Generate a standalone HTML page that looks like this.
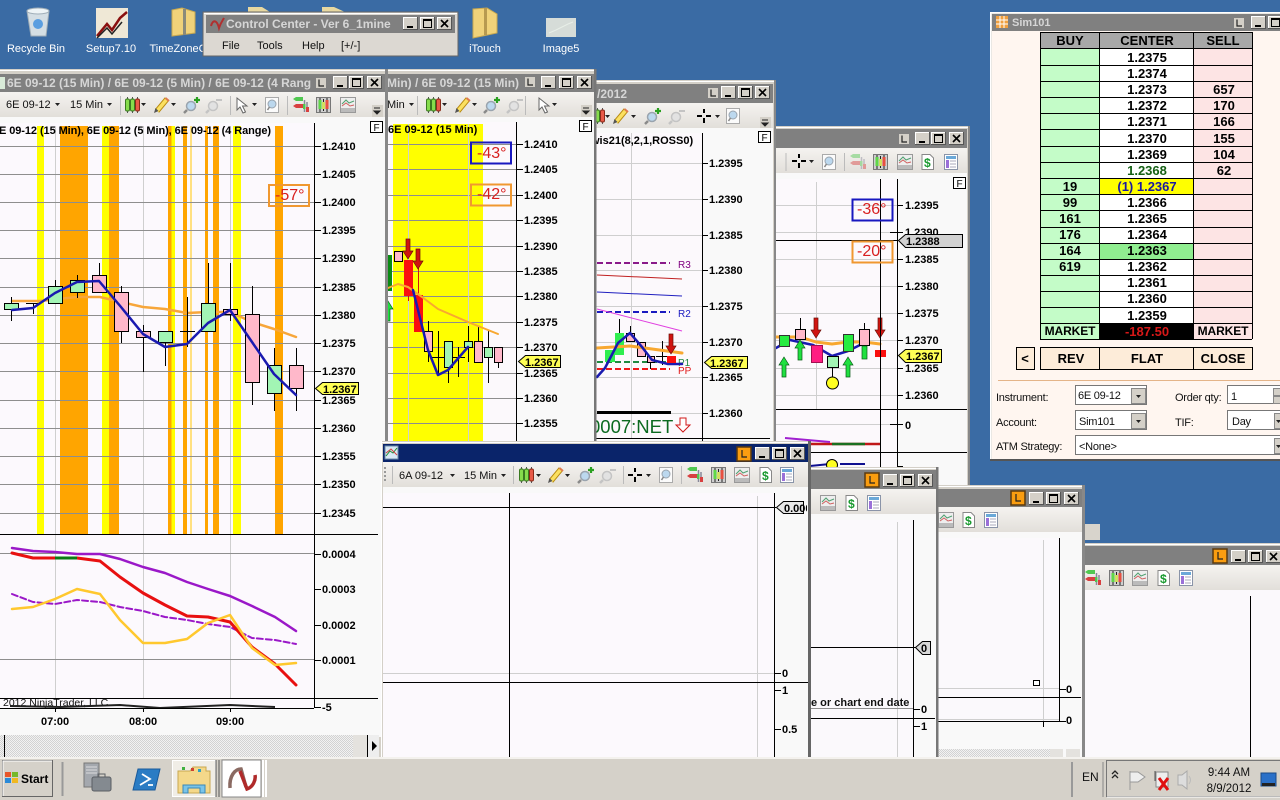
<!DOCTYPE html>
<html><head><meta charset="utf-8"><title>NinjaTrader</title>
<style>
html,body{margin:0;padding:0;width:1280px;height:800px;overflow:hidden;background:#3a6ba4}
svg{display:block}
text{font-family:"Liberation Sans",sans-serif}
.ax{font-size:11px;font-weight:bold;fill:#000}
.tt{font-size:12px;font-weight:bold;fill:#d6d6d6}
.tb{font-size:11px;fill:#111}
.dk{font-size:11px;fill:#fff;text-anchor:middle}
.ang{font-size:16px;fill:#d82020}
.sb{font-size:13px;font-weight:bold;fill:#000;text-anchor:middle}
.mk{font-size:12px;letter-spacing:-.1px}
.lb{font-size:11px;fill:#111;letter-spacing:-.25px}
.k{stroke:#000;fill:none;shape-rendering:crispEdges}
.g{stroke:#8e8e8e;fill:none;shape-rendering:crispEdges}
.l{stroke:#cfcfcf;fill:none;shape-rendering:crispEdges}
.cg{fill:#a2f5b4;stroke:#000;shape-rendering:crispEdges}
.cp{fill:#ffb8ca;stroke:#000;shape-rendering:crispEdges}
.cr{fill:#fa0f0f;shape-rendering:crispEdges}
.cb{fill:#26ec40;stroke:#333;shape-rendering:crispEdges}
.r{shape-rendering:crispEdges}
.ln{fill:none;stroke-linejoin:round;stroke-linecap:round}
</style></head><body>
<svg width="1280" height="800" viewBox="0 0 1280 800" xmlns="http://www.w3.org/2000/svg">
<defs>
<linearGradient id="tg" x1="0" y1="0" x2="0" y2="1"><stop offset="0" stop-color="#f5f3f0"/><stop offset="1" stop-color="#e2dfda"/></linearGradient>
<pattern id="di" width="2" height="2" patternUnits="userSpaceOnUse"><rect width="2" height="2" fill="#f2f2f2"/><rect width="1" height="1" fill="#d2d2d2"/><rect x="1" y="1" width="1" height="1" fill="#d2d2d2"/></pattern>
<g id="bb"><rect width="15" height="13" fill="#d4d0c8"/><path d="M.5 13V.5H15" fill="none" stroke="#fff"/><path d="M14.500 0V12.500H0" fill="none" stroke="#555"/></g>
<g id="bmin"><use href="#bb"/><rect x="4" y="9" width="6" height="2" fill="#000"/></g>
<g id="bmax"><use href="#bb"/><rect x="3.500" y="2.500" width="8" height="8" fill="none" stroke="#000"/><rect x="3" y="2" width="9" height="2" fill="#000"/></g>
<g id="bclo"><use href="#bb"/><path d="M4 3L11 10M11 3L4 10" stroke="#000" stroke-width="1.600"/></g>
<g id="lo"><rect width="14" height="14" fill="#fa9d10" stroke="#5a3a10" stroke-width="1.500"/><path d="M5 3V10H10" stroke="#222" stroke-width="1.200" fill="none"/></g>
<g id="lg"><rect width="10" height="10" fill="#d4d0c8"/><path d="M3 1.500V8H8" stroke="#222" stroke-width="1.200" fill="none"/></g>
<path id="da" d="M0 0H5L2.500 3Z" fill="#222"/>
<g id="ic"><path d="M2.500 0V16M7.500 0V16M12.500 0V16" stroke="#555"/><rect x=".5" y="2" width="4" height="12" rx="1.500" fill="#86dc4c" stroke="#3a7a20"/><rect x="5.500" y="2" width="4" height="12" rx="1.500" fill="#86dc4c" stroke="#3a7a20"/><rect x="10.500" y="2" width="4" height="12" rx="1.500" fill="#e85a48" stroke="#8a2a18"/></g>
<g id="pn"><path d="M3 14L13 2" stroke="#b88a10" stroke-width="5.500"/><path d="M3 14L13 2" stroke="#fbe060" stroke-width="3.500"/><path d="M0 16L1.500 11L4.500 14Z" fill="#555"/><path d="M11.500 1L15 4" stroke="#e07a50" stroke-width="2"/></g>
<g id="zp"><circle cx="7" cy="9" r="4.500" fill="#bcd8ee" stroke="#9aa4ae" stroke-width="1.500"/><path d="M3 13L0 16" stroke="#8a8a8a" stroke-width="2.500"/><path d="M13 0V6M10 3H16" stroke="#2aa020" stroke-width="2.200"/></g>
<g id="zm"><circle cx="7" cy="9" r="4.500" fill="#e2e2e2" stroke="#c4c4c4" stroke-width="1.500"/><path d="M3 13L0 16" stroke="#c4c4c4" stroke-width="2.500"/><path d="M10 3H16" stroke="#c4c4c4" stroke-width="2"/></g>
<path id="cu" d="M1 0V12L4 9L7 15L9.500 14L6.500 8H11Z" fill="#fff" stroke="#666"/>
<path id="cs" d="M7 0V4M7 9V14M0 7H5M9 7H14" stroke="#000" stroke-width="2" fill="none"/>
<g id="mg"><rect x=".5" y=".5" width="13" height="15" fill="#fbfbfb" stroke="#aaa"/><circle cx="7" cy="7" r="4" fill="#bcd8ee" stroke="#9aa4ae"/><path d="M4.500 10L2.500 13" stroke="#888" stroke-width="1.500"/></g>
<g id="bi"><path d="M0 2L3 0H10V4H3Z" fill="#50c850"/><path d="M0 9L3 7H10V11H3Z" fill="#d84040"/><path d="M11.500 3V15M14 5V15" stroke="#889" stroke-width="1.500"/><rect x="13" y="10" width="3" height="5" fill="#d84040"/><rect x="10" y="7" width="2.500" height="5" fill="#50c850"/></g>
<g id="ci"><rect x=".5" y=".5" width="14" height="15" fill="#cfcfcf" stroke="#777"/><rect x="2.500" y="3" width="3" height="9" fill="#60d848"/><rect x="6" y="5" width="3" height="7" fill="#d0e060"/><rect x="9.500" y="3" width="3" height="9" fill="#e85040"/><path d="M4 1V3M4 12V15M7.500 2V5M7.500 12V14M11 1V3M11 12V15" stroke="#222"/></g>
<g id="li"><rect x=".5" y=".5" width="15" height="15" fill="#eee" stroke="#999"/><rect x="1" y="11" width="14" height="4" fill="#bbb"/><path d="M2 7L6 3L9 6L14 4" stroke="#50a070" fill="none"/><path d="M2 9L6 6L10 9L14 8" stroke="#d06060" fill="none"/></g>
<g id="ds"><path d="M1 .5H9L12.500 4V15.500H1Z" fill="#fff" stroke="#888"/><text x="3" y="13" style="font-size:12px;font-weight:bold;fill:#1a9a30">$</text></g>
<g id="pa"><rect x=".5" y=".5" width="13" height="15" fill="#fff" stroke="#8a94a8"/><rect x="2" y="2" width="10" height="3" fill="#6aa8d8"/><rect x="2" y="6" width="3" height="8" fill="#9a70d8"/><path d="M6 7H12M6 10H12M6 13H12" stroke="#aab"/></g>
<g id="rd"><path d="M-2 0H2V12H5L0 20L-5 12H-2Z" fill="#d01410" stroke="#6a1008" stroke-width=".7"/></g>
<g id="gu"><path d="M0 0L5 8H2V20H-2V8H-5Z" fill="#20e040" stroke="#0a5a18" stroke-width=".7"/></g>
<g id="fb"><rect x=".5" y=".5" width="12" height="11" fill="#fff" stroke="#000"/><text x="3.500" y="10" style="font-size:10px;fill:#000">F</text></g>
</defs>

<!-- desktop -->
<rect width="1280" height="800" fill="#3a6ba4"/>
<path d="M27 11H49L46 36H31Z" fill="#d4dee4" stroke="#a0aeb8"/><ellipse cx="38" cy="11" rx="11" ry="3" fill="#eef4f6" stroke="#a0aeb8"/><circle cx="38" cy="24" r="5" fill="#5a9ee0"/>
<rect x="96" y="8" width="32" height="30" fill="#efe8d6"/><path d="M97 36L107 24L112 30L120 18L127 12" stroke="#8a1010" stroke-width="2.500" fill="none"/><path d="M97 38L107 28L112 34L122 22" stroke="#222" stroke-width="1.500" fill="none"/>
<path d="M172 10L182 8L195 12V33L172 36Z" fill="#f0d27a" stroke="#c8a850"/><rect x="183" y="9" width="3" height="26" fill="#8a8a7a"/>
<path d="M473 9L487 8L497 14V33L473 38Z" fill="#f0d27a" stroke="#c8a850"/><rect x="484" y="8" width="3" height="27" fill="#b89a50"/>
<rect x="546" y="18" width="30" height="19" fill="#d6dcd8"/><path d="M549 33L556 30L562 27L568 24L573 22" stroke="#e8eee8" fill="none"/>
<path d="M248 7H262L270 12H248ZM322 7H334L345 12H322Z" fill="#e8d8a0"/>
<text class="dk" x="36" y="52">Recycle Bin</text><text class="dk" x="111" y="52">Setup7.10</text><text class="dk" x="178" y="52">TimeZoneC</text><text class="dk" x="485" y="52">iTouch</text><text class="dk" x="561" y="52">Image5</text>

<!-- Control Center -->
<rect x="203" y="12" width="255" height="44" fill="#dcd8d2" stroke="#666"/><rect x="204" y="13" width="253" height="1" fill="#fff"/><rect x="206" y="15" width="249" height="18" fill="#808080"/>
<path d="M211 26C213 19 217 20 219 28C221 22 223 20 224 18" stroke="#b03030" stroke-width="2" fill="none"/>
<text x="226" y="28" style="font-size:12px;font-weight:bold;fill:#d6d6d6">Control Center - Ver 6_1mine</text>
<use href="#bmin" x="403" y="17"/><use href="#bmax" x="420" y="17"/><use href="#bclo" x="437" y="17"/>
<g class="tb"><text x="222" y="49">File</text><text x="257" y="49">Tools</text><text x="302" y="49">Help</text><text x="341" y="49">[+/-]</text></g>

<!-- Sim101 -->
<rect x="990" y="12" width="295" height="449" fill="#d4d0c8"/><rect x="990" y="12" width="295" height="1.500" fill="#fff"/><rect x="990" y="12" width="1.500" height="449" fill="#fff"/><rect x="990" y="459" width="295" height="2" fill="#555"/>
<rect x="992" y="14" width="288" height="17" fill="#808080"/><rect x="992" y="31" width="288" height="428" fill="#fff6f0"/>
<g class="r"><rect x="996" y="16" width="12" height="12" fill="#f0a040"/><path d="M1000 16V28M1004 16V28M996 20H1008M996 24H1008" stroke="#fff"/></g>
<text x="1012" y="26" style="font-size:11px;font-weight:bold;fill:#d6d6d6">Sim101</text>
<use href="#lg" x="1234" y="18"/><use href="#bmin" x="1251" y="16"/><use href="#bmax" x="1268" y="16"/>
<g class="r">
<rect x="1040" y="32" width="212" height="16" fill="#a8a8a8"/>
<rect x="1040" y="48" width="59" height="291" fill="#c4fcc8"/><rect x="1099" y="48" width="94" height="291" fill="#fff"/><rect x="1193" y="48" width="59" height="291" fill="#fde4e4"/>
<rect x="1099" y="178" width="94" height="16" fill="#ffff00"/><rect x="1099" y="243" width="94" height="16" fill="#90ee90"/>
<rect x="1099" y="323" width="94" height="16" fill="#000"/>
<path d="M1040 32.500H1252M1040 48.500H1252M1040 65.500H1252M1040 81.500H1252M1040 97.500H1252M1040 113.500H1252M1040 129.500H1252M1040 146.500H1252M1040 162.500H1252M1040 178.500H1252M1040 194.500H1252M1040 210.500H1252M1040 227.500H1252M1040 243.500H1252M1040 259.500H1252M1040 275.500H1252M1040 291.500H1252M1040 307.500H1252M1040 323.500H1252M1040 339.500H1252M1040.500 32V339M1099.500 32V339M1193.500 32V339M1252.500 32V339" stroke="#000" fill="none"/>
<rect x="1040.500" y="347.500" width="212" height="22" fill="#fdecd9" stroke="#000"/><path d="M1099.500 347V369M1193.500 347V369" stroke="#000"/>
<rect x="1016.500" y="347.500" width="18" height="22" fill="#fdecd9" stroke="#000"/>
<rect x="998" y="380" width="282" height="1" fill="#e4b488"/>
</g>
<g class="sb">
<text x="1070" y="45">BUY</text><text x="1147" y="45">CENTER</text><text x="1223" y="45">SELL</text>
<text x="1147" y="62">1.2375</text><text x="1147" y="78">1.2374</text><text x="1147" y="94">1.2373</text><text x="1147" y="110">1.2372</text><text x="1147" y="126">1.2371</text><text x="1147" y="143">1.2370</text><text x="1147" y="159">1.2369</text><text x="1147" y="175" style="fill:#156015">1.2368</text><text x="1147" y="191" style="fill:#1a1aa0">(1) 1.2367</text><text x="1147" y="207">1.2366</text><text x="1147" y="223">1.2365</text><text x="1147" y="239">1.2364</text><text x="1147" y="255">1.2363</text><text x="1147" y="271">1.2362</text><text x="1147" y="287">1.2361</text><text x="1147" y="303">1.2360</text><text x="1147" y="320">1.2359</text>
<text x="1224" y="94">657</text><text x="1224" y="110">170</text><text x="1224" y="126">166</text><text x="1224" y="143">155</text><text x="1224" y="159">104</text><text x="1224" y="175">62</text>
<text x="1070" y="191">19</text><text x="1070" y="207">99</text><text x="1070" y="223">161</text><text x="1070" y="239">176</text><text x="1070" y="255">164</text><text x="1070" y="271">619</text>
<text class="mk" x="1070" y="335">MARKET</text><text class="mk" x="1223" y="335">MARKET</text><text x="1147" y="336" style="fill:#d81818">-187.50</text>
<text x="1071" y="363">REV</text><text x="1147" y="363">FLAT</text><text x="1223" y="363">CLOSE</text><text x="1025" y="363">&lt;</text>
</g>
<g class="lb"><text x="996" y="401">Instrument:</text><text x="996" y="426">Account:</text><text x="996" y="450">ATM Strategy:</text><text x="1175" y="401">Order qty:</text><text x="1175" y="426">TIF:</text></g>
<g class="r" fill="#fff" stroke="#777">
<rect x="1075.500" y="385.500" width="71" height="19"/><rect x="1075.500" y="410.500" width="71" height="19"/><rect x="1075.500" y="435.500" width="210" height="19"/><rect x="1227.500" y="385.500" width="60" height="18"/><rect x="1227.500" y="410.500" width="60" height="19"/>
</g>
<g class="r" fill="#d4d0c8" stroke="#888"><rect x="1131.500" y="388.500" width="14" height="15"/><rect x="1131.500" y="413.500" width="14" height="15"/><rect x="1274.500" y="438.500" width="12" height="15"/><rect x="1274.500" y="413.500" width="12" height="15"/><rect x="1273.500" y="388.500" width="12" height="7"/><rect x="1273.500" y="396.500" width="12" height="7"/></g>
<use href="#da" x="1136" y="395"/><use href="#da" x="1136" y="420"/><use href="#da" x="1276" y="445"/><use href="#da" x="1276" y="420"/>
<g class="lb"><text x="1078" y="399">6E 09-12</text><text x="1079" y="425">Sim101</text><text x="1079" y="450">&lt;None&gt;</text><text x="1231" y="400">1</text><text x="1232" y="425">Day</text></g>

<!-- Window D -->
<rect x="770" y="126" width="200" height="365" fill="#d4d0c8"/><rect x="770" y="127" width="200" height="1" fill="#fff"/><rect x="968" y="126" width="2" height="365" fill="#888"/>
<rect x="770" y="129" width="197" height="19" fill="#808080"/><rect x="770" y="148" width="197" height="25" fill="url(#tg)"/>
<use href="#lg" x="899" y="134"/><use href="#bmin" x="915" y="132"/><use href="#bmax" x="931" y="132"/><use href="#bclo" x="949" y="132"/>
<rect x="770" y="173" width="197" height="320" fill="#f9f9f9"/><rect x="770" y="179" width="127" height="300" fill="#fcf9fc"/>
<path class="k" d="M786 153V171M844.500 153V171" style="stroke:#bbb"/>
<use href="#cs" x="792" y="154"/><use href="#da" x="809" y="160"/><use href="#mg" x="822" y="154"/>
<g opacity=".45"><use href="#bi" x="850" y="154"/></g><use href="#ci" x="873" y="154"/><use href="#li" x="897" y="154"/><use href="#ds" x="921" y="154"/><use href="#pa" x="944" y="154"/>
<use href="#fb" x="953" y="177"/>
<path class="l" d="M770 205.500H897M770 232.500H897M770 259.500H897M770 286.500H897M770 313.500H897M770 340.500H897M770 368.500H897M770 395.500H897M770 424.500H897M816.500 182V410"/>
<path class="ln" d="M776 337L800 337L816 342L832 344L848 342L864 342L880 344" stroke="#f8a830" stroke-width="3"/>
<path class="ln" d="M776 348L790 340L813 345L832 356L848 351L860 345" stroke="#1a1ab0" stroke-width="2.500"/>
<path class="k" d="M800.500 318V329M864.500 323V329M832.500 367V380"/>
<rect class="cb" x="779.500" y="335.500" width="10" height="11"/><rect class="cp" x="795.500" y="329.500" width="10" height="10"/><rect x="811.500" y="345.500" width="11" height="17" fill="#ff1e82" stroke="#a01050" class="r"/><rect class="cg" x="827.500" y="356.500" width="11" height="11"/><rect class="cb" x="843.500" y="334.500" width="10" height="17"/><rect class="cp" x="859.500" y="329.500" width="10" height="16"/>
<circle cx="832.500" cy="383" r="6" fill="#ffff20" stroke="#000"/>
<use href="#gu" x="784" y="357"/><use href="#gu" x="800" y="340"/><use href="#gu" x="848" y="357"/><rect x="862" y="346" width="5" height="13" fill="#20e040" stroke="#0a5a18" stroke-width=".7"/>
<use href="#rd" x="816" y="318"/><use href="#rd" x="880" y="318"/><rect class="cr" x="875" y="350" width="11" height="7"/>
<path class="k" d="M770 240.500H897M880.500 179V490M897.500 179V470M770 409.500H967M770 452.500H967M897 205.500H903M890 232.500H903M897 259.500H903M897 286.500H903M897 313.500H903M897 340.500H903M897 368.500H903M897 395.500H903M890 424.500H903M897 466.500H903"/>
<path d="M805 444H880" stroke="#c01818" stroke-width="2.500"/><path d="M832 444H865" stroke="#1a7020" stroke-width="2.500"/><path d="M785 438L830 442" stroke="#a020d0" stroke-width="2"/>
<path d="M810 466L830 464M840 464H865" stroke="#101090" stroke-width="2"/><circle cx="832" cy="465" r="5.500" fill="#ffff20" stroke="#000"/>
<g class="ax"><text x="905" y="209">1.2395</text><text x="905" y="236">1.2390</text><text x="905" y="263">1.2385</text><text x="905" y="290">1.2380</text><text x="905" y="317">1.2375</text><text x="905" y="344">1.2370</text><text x="905" y="372">1.2365</text><text x="905" y="399">1.2360</text><text x="905" y="429">0</text></g>
<path d="M898.500 240.500L905.500 234.500H962.500V247.500H905.500Z" fill="#d2d2d2" stroke="#000"/><text class="ax" x="906" y="245">1.2388</text>
<path d="M898.500 355.500L905.500 349.500H941.500V362.500H905.500Z" fill="#ffff55" stroke="#000"/><text class="ax" x="906" y="360">1.2367</text>
<rect x="852.500" y="199.500" width="40" height="21" fill="none" stroke="#1818c0" stroke-width="2"/><text class="ang" x="857" y="214">-36°</text>
<rect x="852.500" y="241.500" width="40" height="21" fill="none" stroke="#f09830" stroke-width="2"/><text class="ang" x="857" y="256">-20°</text>

<!-- Window C -->
<rect x="590" y="80" width="186" height="372" fill="#d4d0c8"/><rect x="590" y="81" width="186" height="1" fill="#fff"/><rect x="774" y="80" width="2" height="372" fill="#888"/>
<rect x="590" y="84" width="183" height="19" fill="#808080"/><rect x="590" y="103" width="183" height="25" fill="url(#tg)"/>
<text class="tt" x="597" y="98">/2012</text>
<use href="#lg" x="708" y="88"/><use href="#bmin" x="721" y="86"/><use href="#bmax" x="738" y="86"/><use href="#bclo" x="755" y="86"/>
<rect x="590" y="128" width="183" height="315" fill="#f9f9f9"/><rect x="590" y="133" width="112" height="305" fill="#fcf9fc"/>
<use href="#ic" x="590" y="108"/><use href="#da" x="605" y="115"/><use href="#pn" x="613" y="108"/><use href="#da" x="631" y="115"/><use href="#zp" x="645" y="108"/><use href="#zm" x="669" y="108"/><use href="#cs" x="697" y="109"/><use href="#da" x="715" y="115"/><use href="#mg" x="726" y="108"/>
<rect x="760" y="117" width="11" height="11" fill="#d4d0c8"/><path d="M762 120H768M762 123H768L765 126Z" stroke="#222" fill="#222"/>
<use href="#fb" x="758" y="131"/>
<path class="l" d="M596 163.500H702M596 199.500H702M596 235.500H702M596 270.500H702M596 306.500H702M596 342.500H702M596 377.500H702M596 413.500H702M631.500 133V438"/>
<text x="591" y="144" style="font-size:11px;font-weight:bold;fill:#000">wis21(8,2,1,ROSS0)</text>
<path d="M597 263H670" stroke="#8a1a8a" stroke-width="2" stroke-dasharray="6 3"/><path d="M597 312H670" stroke="#1a1ac0" stroke-width="2" stroke-dasharray="6 3"/>
<path d="M597 362H670" stroke="#208a40" stroke-width="2" stroke-dasharray="6 3"/><path d="M597 369H670" stroke="#f01818" stroke-width="2" stroke-dasharray="6 3"/>
<path d="M597 275L682 279" stroke="#c02020" fill="none"/><path d="M597 292L682 296" stroke="#2020c0" fill="none"/><path d="M597 309L682 331" stroke="#e040e0" fill="none"/>
<text x="678" y="268" style="font-size:10px;fill:#800080">R3</text><text x="678" y="317" style="font-size:10px;fill:#1a1ac0">R2</text><text x="678" y="366" style="font-size:10px;fill:#208a40">P1</text><text x="678" y="374" style="font-size:10px;fill:#e01818">PP</text>
<path class="k" d="M619.500 319V333M630.500 326V333M650.500 362V369M662.500 341V365M656 356.500H669"/>
<rect x="605" y="350" width="10" height="12" fill="#30ee50" class="r"/><rect x="615" y="333" width="9" height="22" fill="#30ee50" class="r"/><rect class="cp" x="626.500" y="333.500" width="8" height="8"/><rect class="cp" x="637.500" y="342.500" width="8" height="14"/><rect class="cp" x="647.500" y="356.500" width="7" height="6"/>
<path class="ln" d="M597 348L630 346L652 349L682 353" stroke="#f8a830" stroke-width="3"/>
<path class="ln" d="M597 377L605 368L618 343L630 333L642 347L652 360L668 364L682 364" stroke="#1a1ab0" stroke-width="2.500"/>
<rect class="cr" x="667" y="356" width="9" height="7"/><use href="#rd" x="671" y="334"/>
<rect x="597" y="411" width="74" height="3" fill="#000"/>
<text x="590" y="433" style="font-size:18.500px;fill:#0c6a20">0007:NET</text>
<path d="M680 418H686V425H690L683 432L676 425H680Z" fill="#fff" stroke="#d01818"/>
<path class="k" d="M702.500 133V443M596 438.500H770M702 163.500H708M702 199.500H708M702 235.500H708M702 270.500H708M702 306.500H708M702 342.500H708M702 377.500H708M702 413.500H708"/>
<g class="ax"><text x="709" y="167">1.2395</text><text x="709" y="203">1.2390</text><text x="709" y="239">1.2385</text><text x="709" y="274">1.2380</text><text x="709" y="310">1.2375</text><text x="709" y="346">1.2370</text><text x="709" y="381">1.2365</text><text x="709" y="417">1.2360</text></g>
<path d="M704.500 362.500L711.500 356.500H747.500V368.500H711.500Z" fill="#ffff55" stroke="#000"/><text class="ax" x="710" y="367">1.2367</text>

<!-- Window B -->
<rect x="380" y="69" width="216" height="375" fill="#d4d0c8"/><rect x="380" y="70" width="216" height="1" fill="#fff"/><rect x="594" y="69" width="2.500" height="375" fill="#777"/>
<rect x="380" y="74" width="214" height="18" fill="#808080"/><rect x="380" y="92" width="214" height="25" fill="url(#tg)"/>
<text class="tt" x="387" y="87">Min) / 6E 09-12 (15 Min)</text>
<use href="#lg" x="525" y="77"/><use href="#bmin" x="541" y="76"/><use href="#bmax" x="559" y="76"/><use href="#bclo" x="577" y="76"/>
<text class="tb" x="387" y="108">Min</text><use href="#da" x="409" y="103"/><path class="k" d="M417.500 96V115M525.500 96V115" style="stroke:#bbb"/>
<use href="#ic" x="426" y="97"/><use href="#da" x="442" y="103"/><use href="#pn" x="455" y="97"/><use href="#da" x="472" y="103"/><use href="#zp" x="484" y="97"/><use href="#zm" x="507" y="97"/><use href="#cu" x="538" y="98"/><use href="#da" x="552" y="103"/>
<rect x="581" y="105" width="11" height="12" fill="#d4d0c8"/><path d="M583 108H589M583 111H589L586 114Z" stroke="#222" fill="#222"/>
<rect x="380" y="117" width="214" height="325" fill="#f9f9f9"/><rect x="380" y="122" width="136" height="320" fill="#fcf9fc"/>
<rect x="393" y="124" width="90" height="318" fill="#ffff00" class="r"/>
<path class="g" d="M380 144.500H516M380 169.500H516M380 195.500H516M380 220.500H516M380 246.500H516M380 271.500H516M380 296.500H516M380 322.500H516M380 347.500H516M380 373.500H516M380 398.500H516M380 423.500H516"/>
<path class="l" d="M408.500 124V442M468.500 124V442"/>
<rect x="380" y="255" width="12" height="36" fill="#0a8a14" class="r"/><use href="#gu" x="388" y="301"/>
<path class="k" d="M428.500 321V362M438.500 331V375M448.500 341V383M458.500 347V377M468.500 326V362M478.500 326V341M488.500 331V383M498.500 362V368M431 357.500H446M451 357.500H465"/>
<rect class="cp" x="394.500" y="251.500" width="8" height="10"/>
<path d="M408.500 296V301M418.500 268V296" stroke="#d01410"/>
<rect class="cr" x="404" y="260" width="9" height="36"/><rect class="cr" x="414" y="295" width="9" height="37"/>
<rect class="cp" x="424.500" y="331.500" width="8" height="20"/><rect class="cg" x="444.500" y="341.500" width="8" height="26"/><rect class="cg" x="464.500" y="341.500" width="8" height="6"/><rect class="cp" x="474.500" y="341.500" width="8" height="21"/><rect class="cg" x="484.500" y="347.500" width="8" height="10"/><rect class="cp" x="494.500" y="347.500" width="8" height="15"/>
<path class="ln" d="M388 288L398 284L408 287L422 297L438 309L468 322L498 334" stroke="#f8a830" stroke-width="2"/>
<path class="ln" d="M413 290L428 350L438 375L448 370L468 347" stroke="#1a1ab0" stroke-width="2.500"/>
<use href="#rd" x="408" y="239"/><use href="#rd" x="418" y="249"/>
<path class="k" d="M516.500 122V442M516 144.500H523M516 169.500H523M516 195.500H523M516 220.500H523M516 246.500H523M516 271.500H523M516 296.500H523M516 322.500H523M516 347.500H523M516 373.500H523M516 398.500H523M516 423.500H523"/>
<g class="ax"><text x="524" y="148">1.2410</text><text x="524" y="173">1.2405</text><text x="524" y="199">1.2400</text><text x="524" y="224">1.2395</text><text x="524" y="250">1.2390</text><text x="524" y="275">1.2385</text><text x="524" y="300">1.2380</text><text x="524" y="326">1.2375</text><text x="524" y="351">1.2370</text><text x="524" y="377">1.2365</text><text x="524" y="402">1.2360</text><text x="524" y="427">1.2355</text></g>
<path d="M518.500 361.500L525.500 355.500H560.500V367.500H525.500Z" fill="#ffff55" stroke="#000"/><text class="ax" x="525" y="366">1.2367</text>
<rect x="471" y="142.500" width="40" height="21" fill="none" stroke="#1818c0" stroke-width="2"/><text class="ang" x="477" y="158">-43°</text>
<rect x="471" y="184.500" width="40" height="21" fill="none" stroke="#f09830" stroke-width="2"/><text class="ang" x="477" y="199">-42°</text>
<text x="388" y="133" style="font-size:11px;font-weight:bold;fill:#000">6E 09-12 (15 Min)</text>
<use href="#fb" x="579" y="120"/>

<!-- Window A -->
<rect x="0" y="69" width="388" height="690" fill="#d4d0c8"/><rect x="0" y="70" width="388" height="1" fill="#fff"/><rect x="385" y="69" width="3" height="690" fill="#888"/>
<rect x="0" y="74" width="385" height="18" fill="#808080"/><rect x="0" y="92" width="385" height="25" fill="url(#tg)"/>
<rect x="0" y="77" width="5" height="12" fill="#d8ead8"/>
<text class="tt" x="7" y="87">6E 09-12 (15 Min) / 6E 09-12 (5 Min) / 6E 09-12 (4 Rang</text>
<rect x="313" y="74" width="4" height="18" fill="#808080"/>
<use href="#lg" x="316" y="78"/><use href="#bmin" x="333" y="76"/><use href="#bmax" x="349" y="76"/><use href="#bclo" x="367" y="76"/>
<text class="tb" x="6" y="108">6E 09-12</text><use href="#da" x="55" y="103"/><text class="tb" x="70" y="108">15 Min</text><use href="#da" x="107" y="103"/>
<path class="k" d="M120.500 96V115M230.500 96V115M287.500 96V115" style="stroke:#bbb"/>
<use href="#ic" x="125" y="97"/><use href="#da" x="141" y="103"/><use href="#pn" x="154" y="97"/><use href="#da" x="171" y="103"/><use href="#zp" x="184" y="97"/><use href="#zm" x="206" y="97"/><use href="#cu" x="236" y="98"/><use href="#da" x="252" y="103"/><use href="#mg" x="265" y="97"/><use href="#bi" x="293" y="97"/><use href="#ci" x="316" y="97"/><use href="#li" x="340" y="97"/>
<rect x="372" y="105" width="11" height="12" fill="#d4d0c8"/><path d="M374 108H380M374 111H380L377 114Z" stroke="#222" fill="#222"/>
<rect x="0" y="117" width="385" height="620" fill="#f9f9f9"/><rect x="0" y="123" width="314" height="585" fill="#fcf9fd"/>
<g class="r" fill="#ffa500">
<rect x="37" y="126" width="7" height="408" fill="#ffff00"/><rect x="60" y="126" width="28" height="408"/><rect x="102" y="126" width="7" height="408" fill="#ffff00"/><rect x="109" y="126" width="10" height="408"/>
<rect x="168" y="126" width="3.500" height="408"/><rect x="171.500" y="126" width="3.500" height="408" fill="#ffff00"/><rect x="183" y="126" width="4" height="408"/><rect x="190" y="126" width="2" height="408" fill="#ffe080"/><rect x="205" y="126" width="3" height="408"/><rect x="213" y="126" width="6" height="408"/><rect x="233" y="126" width="8" height="408" fill="#ffff00"/><rect x="275" y="126" width="8" height="408"/>
</g>
<path class="l" d="M55.500 126V698M143.500 126V698M230.500 126V698"/>
<path class="g" d="M0 146.500H314M0 174.500H314M0 202.500H314M0 230.500H314M0 258.500H314M0 287.500H314M0 315.500H314M0 343.500H314M0 371.500H314M0 400.500H314M0 428.500H314M0 456.500H314M0 484.500H314M0 513.500H314M0 553.500H314M0 659.500H314"/>
<path class="ln" d="M12 301L40 301L77 297L100 297L121 302L143 307L165 309L187 313L208 312L230 312L252 322L274 329L296 337" stroke="#f7a63a" stroke-width="2.500"/>
<path class="k" d="M11.500 297V321M33.500 303V314M26 303.500H41M55.500 280V303M77.500 275V298M99.500 263V292M121.500 286V343M143.500 325V372M165.500 331V366M187.500 297V347M180 331.500H195M208.500 263V331M230.500 263V321M252.500 286V405M274.500 348V411M296.500 348V411"/>
<rect class="cg" x="4.500" y="303.500" width="14" height="6"/><rect class="cg" x="48.500" y="286.500" width="14" height="17"/><rect class="cg" x="70.500" y="280.500" width="14" height="12"/><rect class="cp" x="92.500" y="275.500" width="14" height="17"/><rect class="cp" x="114.500" y="292.500" width="14" height="39"/><rect class="cp" x="136.500" y="331.500" width="14" height="6"/><rect class="cg" x="158.500" y="331.500" width="14" height="11"/><rect class="cg" x="201.500" y="303.500" width="14" height="28"/><rect class="cp" x="223.500" y="309.500" width="14" height="5"/><rect class="cp" x="245.500" y="314.500" width="14" height="68"/><rect class="cg" x="267.500" y="365.500" width="14" height="28"/><rect class="cp" x="289.500" y="365.500" width="14" height="23"/>
<path class="ln" d="M12 310L33 308L55 293L77 282L99 281L121 307L143 334L165 347L187 344L208 323L230 310L252 342L274 374L296 395" stroke="#1a1ab0" stroke-width="2.500"/>
<rect x="269" y="185" width="40" height="21" fill="none" stroke="#f09830" stroke-width="2"/><text class="ang" x="275" y="200">-57°</text>
<rect x="0" y="534" width="314" height="1" fill="#000"/>
<path class="ln" d="M12 548L33 551L55 552L77 554L100 554L120 559L143 567L165 573L187 582L208 589L230 596L252 606L275 617L296 631" stroke="#9a18c8" stroke-width="2.500"/>
<path class="ln" d="M12 594L33 602L55 604L77 600L100 602L120 607L143 611L165 617L187 620L208 624L230 627L252 638L275 640L296 644" stroke="#9a18c8" stroke-width="2" stroke-dasharray="6 3"/>
<path class="ln" d="M12 553L33 558L55 558M77 558L100 561L120 577L143 593L165 605L187 616L208 617L230 622L252 647L275 664L296 685" stroke="#e81010" stroke-width="3"/>
<path d="M55 558H77" stroke="#0a7a14" stroke-width="3"/>
<path class="ln" d="M12 609L33 607L55 599L77 589L100 594L120 620L143 643L165 643L187 639L208 623L230 615L252 648L275 665L296 663" stroke="#ffc82e" stroke-width="2.500"/>
<text x="3" y="706" style="font-size:10.500px;fill:#111">2012 NinjaTrader, LLC</text>
<path d="M10 706L60 707L120 705L160 708L230 705L275 707" stroke="#222" stroke-width="2" fill="none"/>
<path class="k" d="M314.500 123V708M0 534.500H378M0 698.500H378M0 708.500H314M55.500 708V712M143.500 708V712M230.500 708V712M314 146.500H321M314 174.500H321M314 202.500H321M314 230.500H321M314 258.500H321M314 287.500H321M314 315.500H321M314 343.500H321M314 371.500H321M314 400.500H321M314 428.500H321M314 456.500H321M314 484.500H321M314 513.500H321M314 554.500H321M314 589.500H321M314 625.500H321M314 660.500H321M314 707.500H321"/>
<g class="ax"><text x="322" y="150">1.2410</text><text x="322" y="178">1.2405</text><text x="322" y="206">1.2400</text><text x="322" y="234">1.2395</text><text x="322" y="262">1.2390</text><text x="322" y="291">1.2385</text><text x="322" y="319">1.2380</text><text x="322" y="347">1.2375</text><text x="322" y="375">1.2370</text><text x="322" y="404">1.2365</text><text x="322" y="432">1.2360</text><text x="322" y="460">1.2355</text><text x="322" y="488">1.2350</text><text x="322" y="517">1.2345</text>
<text x="322" y="558">0.0004</text><text x="322" y="593">0.0003</text><text x="322" y="629">0.0002</text><text x="322" y="664">0.0001</text><text x="322" y="711">-5</text>
<text x="41" y="725">07:00</text><text x="129" y="725">08:00</text><text x="216" y="725">09:00</text></g>
<path d="M315.500 388.500L322.500 382.500H358.500V394.500H322.500Z" fill="#ffff55" stroke="#000"/><text class="ax" x="323" y="393">1.2367</text>
<text x="-1" y="134" style="font-size:11px;font-weight:bold;fill:#000;letter-spacing:-.08px">E 09-12 (15 Min), 6E 09-12 (5 Min), 6E 09-12 (4 Range)</text>
<use href="#fb" x="370" y="121"/>
<rect x="0" y="735" width="353" height="22" fill="url(#di)"/><rect x="353" y="735" width="14" height="22" fill="#e4e2de"/><rect x="368" y="735" width="11" height="22" fill="#eeeeee"/><path class="k" d="M4.500 735V757M367.500 735V757"/><path d="M372 741L377 746L372 751Z" fill="#000"/>

<!-- Rightmost window -->
<rect x="1085" y="524" width="15" height="16" fill="#d8d4cc"/>
<rect x="1083" y="543" width="200" height="216" fill="#d4d0c8"/><rect x="1083" y="544" width="200" height="1" fill="#fff"/>
<rect x="1085" y="546" width="197" height="19" fill="#808080"/><rect x="1085" y="565" width="197" height="25" fill="url(#tg)"/>
<use href="#lo" x="1213" y="549"/><use href="#bmin" x="1231" y="550"/><use href="#bmax" x="1248" y="550"/><use href="#bclo" x="1266" y="550"/>
<use href="#bi" x="1085" y="570"/><use href="#ci" x="1109" y="570"/><use href="#li" x="1132" y="570"/><use href="#ds" x="1157" y="570"/><use href="#pa" x="1179" y="570"/>
<rect x="1085" y="590" width="195" height="170" fill="#fbf9fc"/><path class="k" d="M1250.500 596V757"/>

<!-- Window 2 -->
<rect x="936" y="485" width="149" height="274" fill="#d4d0c8"/><rect x="936" y="486" width="149" height="1" fill="#fff"/><rect x="1082" y="485" width="3" height="274" fill="#888"/>
<rect x="936" y="489" width="146" height="18" fill="#808080"/><rect x="936" y="507" width="146" height="25" fill="url(#tg)"/>
<use href="#lo" x="1011" y="491"/><use href="#bmin" x="1029" y="492"/><use href="#bmax" x="1046" y="492"/><use href="#bclo" x="1064" y="492"/>
<use href="#li" x="938" y="512"/><use href="#ds" x="962" y="512"/><use href="#pa" x="984" y="512"/>
<rect x="936" y="532" width="146" height="227" fill="#f9f9f9"/><rect x="936" y="538" width="123" height="183" fill="#fbf9fc"/>
<path class="l" d="M1043.500 540V727M936 688.500H1059M936 719.500H1059"/>
<rect x="1033.500" y="680.500" width="6" height="5" fill="#fff" stroke="#000" class="r"/>
<path class="k" d="M1059.500 538V721M936 697.500H1081M936 721.500H1066M1043.500 721V727M1059 689.500H1066"/>
<g class="ax"><text x="1066" y="693">0</text><text x="1066" y="724">0</text></g>
<rect x="936" y="749" width="114" height="8" fill="url(#di)"/><rect x="1050" y="749" width="13" height="8" fill="#e4e2de"/><rect x="1066" y="749" width="14" height="8" fill="#e4e2de"/>

<!-- Window 3 -->
<rect x="808" y="467" width="130" height="292" fill="#d4d0c8"/><rect x="808" y="468" width="130" height="1" fill="#fff"/><rect x="936" y="467" width="2.500" height="292" fill="#777"/>
<rect x="808" y="470" width="128" height="19" fill="#808080"/><rect x="808" y="489" width="128" height="25" fill="url(#tg)"/>
<use href="#lo" x="865" y="473"/><use href="#bmin" x="883" y="474"/><use href="#bmax" x="900" y="474"/><use href="#bclo" x="918" y="474"/>
<use href="#li" x="820" y="495"/><use href="#ds" x="845" y="495"/><use href="#pa" x="867" y="495"/>
<rect x="808" y="514" width="128" height="245" fill="#f9f9f9"/><rect x="808" y="520" width="105" height="240" fill="#fbf9fc"/>
<path class="l" d="M897.500 522V757"/><path class="g" d="M808 708.500H913"/>
<text x="811" y="706" style="font-size:11px;font-weight:bold;fill:#111">e or chart end date</text>
<path class="k" d="M913.500 520V757M808 647.500H916M808 718.500H935M913 709.500H920M913 726.500H920"/>
<path d="M915.500 647.500L922.500 641.500H930.500V654.500H922.500Z" fill="#d8d8d8" stroke="#000"/>
<g class="ax"><text x="921" y="652">0</text><text x="921" y="713">0</text><text x="921" y="730">1</text></g>

<!-- Active window -->
<rect x="381" y="441" width="430" height="318" fill="#d4d0c8"/><rect x="381" y="442" width="430" height="1" fill="#fff"/><rect x="381" y="441" width="1" height="318" fill="#fff"/><rect x="808" y="441" width="3" height="318" fill="#666"/>
<rect x="383" y="444" width="425" height="18" fill="#0a246a"/>
<rect x="385" y="446" width="13" height="13" fill="#d8e8f4" stroke="#6a8aa8"/><path d="M386 456L390 451L393 453L397 448" stroke="#1a8a30" fill="none"/><path d="M386 453L391 449L397 455" stroke="#d04040" fill="none"/>
<use href="#lo" x="737" y="447"/><use href="#bmin" x="755" y="447"/><use href="#bmax" x="772" y="447"/><use href="#bclo" x="790" y="447"/>
<rect x="383" y="462" width="425" height="25" fill="url(#tg)"/>
<path d="M385 467V483" stroke="#999" stroke-width="2" stroke-dasharray="2 2"/><path class="k" d="M392.500 466V484M513.500 466V484M623.500 466V484M681.500 466V484" style="stroke:#bbb"/>
<text class="tb" x="399" y="479">6A 09-12</text><use href="#da" x="450" y="474"/><text class="tb" x="464" y="479">15 Min</text><use href="#da" x="501" y="474"/>
<use href="#ic" x="519" y="467"/><use href="#da" x="536" y="474"/><use href="#pn" x="548" y="467"/><use href="#da" x="565" y="474"/><use href="#zp" x="578" y="467"/><use href="#zm" x="600" y="467"/><use href="#cs" x="628" y="468"/><use href="#da" x="646" y="474"/><use href="#mg" x="659" y="467"/><use href="#bi" x="687" y="467"/><use href="#ci" x="711" y="467"/><use href="#li" x="734" y="467"/><use href="#ds" x="759" y="467"/><use href="#pa" x="780" y="467"/>
<rect x="383" y="487" width="425" height="272" fill="#f9f9f9"/><rect x="383" y="493" width="391" height="267" fill="#fcf9fd"/>
<path class="l" d="M757.500 496V757M383 673.500H775"/>
<path class="k" d="M509.500 493V757M774.500 493V757M383 507.500H776M383 682.500H808M774 673.500H781M774 690.500H781M774 729.500H781"/>
<path d="M776.500 507.500L783.500 501.500H803.500V513.500H783.500Z" fill="#e8e8e8" stroke="#000"/>
<svg x="776" y="500" width="31" height="16"><text class="ax" x="8" y="12">0.000</text></svg>
<g class="ax"><text x="782" y="677">0</text><text x="782" y="694">1</text><text x="782" y="733">0.5</text></g>

<!-- Taskbar -->
<rect x="0" y="757" width="1280" height="43" fill="#d5d1c9"/><rect x="0" y="757" width="1280" height="2" fill="#f4f2ee"/>
<rect x="2.500" y="760.500" width="50" height="36" fill="#d5d1c9" stroke="#666"/><path d="M3 796V761H52" stroke="#fff" fill="none"/>
<g class="r"><rect x="5" y="772" width="6" height="5" fill="#e8562a"/><rect x="12" y="772" width="6" height="5" fill="#76b82a"/><rect x="5" y="778" width="6" height="5" fill="#2a8ad8"/><rect x="12" y="778" width="6" height="5" fill="#f0b820"/></g>
<text x="21" y="783" style="font-size:12px;font-weight:bold;fill:#000">Start</text>
<path d="M62.500 762V796" stroke="#999" stroke-width="2"/>
<rect x="84" y="763" width="15" height="24" fill="#a4a8ae" stroke="#777"/><path d="M86 767H97M86 770H97M86 773H97" stroke="#ddd"/><rect x="92" y="777" width="19" height="14" rx="2" fill="#848a90" stroke="#5a5e64"/><path d="M98 777V774H105V777" fill="none" stroke="#5a5e64"/>
<path d="M138 769H160L155 790H133Z" fill="#2a7cc4" stroke="#1a5a9a"/><path d="M142 774L150 779L140 785M148 785H153" stroke="#fff" stroke-width="1.800" fill="none"/>
<rect x="172.500" y="760.500" width="43" height="36" fill="#f0ede6" stroke="#fff"/><path d="M216 760V797M219 760V797" stroke="#555"/>
<path d="M178 771H190L193 767H206V771H210V793H178Z" fill="#f4d88a" stroke="#c8a850"/><rect x="182" y="767" width="3" height="3" fill="#40b040"/><rect x="191" y="768" width="3" height="3" fill="#d04030"/><rect x="198" y="769" width="3" height="3" fill="#30a0c0"/><path d="M183 793V785H205V793H200V788H188V793Z" fill="#7ac4e8" stroke="#3a88b8"/>
<rect x="222" y="760" width="39" height="37" fill="#fff" stroke="#888"/><path d="M263 760V797M266 760V797" stroke="#fff" stroke-width="2"/>
<path d="M230 788C229 776 235 769 241 769L246 787" fill="none" stroke="#8a6a62" stroke-width="3.500"/><path d="M240 771L247 789C253 787 256 780 255 775" fill="none" stroke="#b02a2a" stroke-width="3.500"/>
<path d="M1072 762V797" stroke="#999" stroke-width="2"/><path d="M1103 762V797" stroke="#888"/>
<text x="1082" y="781" style="font-size:12px;fill:#111">EN</text>
<rect x="1106.500" y="760.500" width="175" height="36" fill="none" stroke="#777"/><path d="M1107 797H1280" stroke="#fff"/>
<path d="M1112 774L1115 771L1118 774M1112 778L1115 775L1118 778" stroke="#222" stroke-width="1.300" fill="none"/>
<path d="M1130 790V771M1130 772H1138L1145 777L1138 782H1130" fill="#eee" stroke="#999"/>
<rect x="1156" y="772" width="12" height="15" fill="#eee" stroke="#888"/><path d="M1155 771V781" stroke="#555"/><path d="M1159 778L1168 790M1168 778L1159 790" stroke="#e01010" stroke-width="3"/>
<path d="M1178 775H1182L1187 771V789L1182 785H1178Z" fill="#ddd" stroke="#aaa"/><path d="M1189 776Q1192 780 1189 784" fill="none" stroke="#bbb"/>
<g style="fill:#111;text-anchor:middle"><text x="1229" y="776" style="font-size:11.500px">9:44 AM</text><text x="1229" y="792" style="font-size:11.500px">8/9/2012</text></g>
<rect x="1261" y="773" width="15" height="13" fill="#2a70c8" stroke="#1a4a88"/><rect x="1262" y="783" width="13" height="3" fill="#222"/>
</svg>
</body></html>
